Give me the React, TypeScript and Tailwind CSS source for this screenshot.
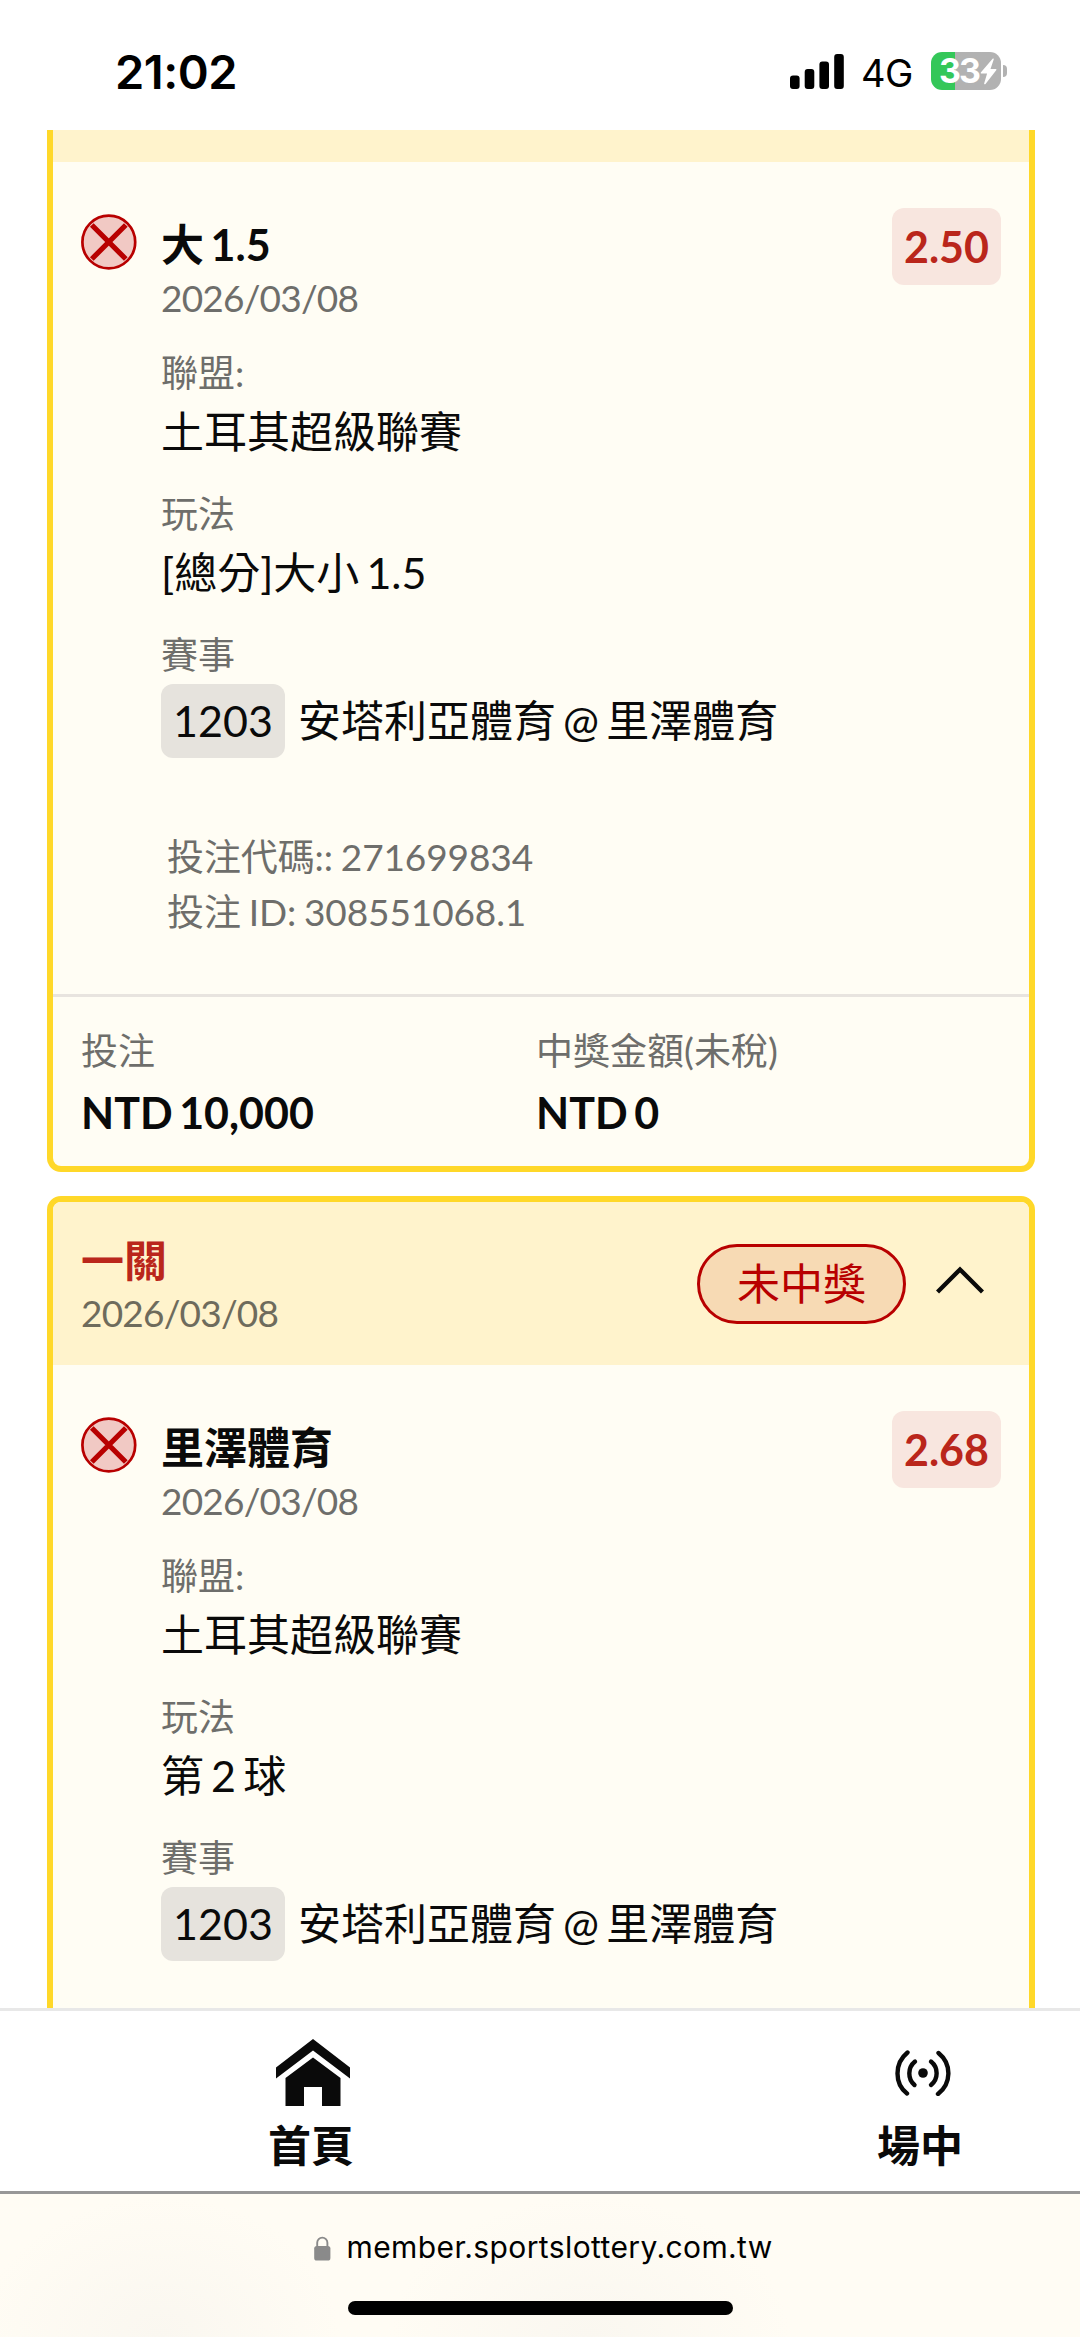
import type { ReactNode } from 'react';

interface Bet {
  pick: string;
  date: string;
  odds: string;
  league: string;
  market: string;
  eventNo: string;
  match: string;
}

const BETS: Bet[] = [
  {
    pick: '大 1.5',
    date: '2026/03/08',
    odds: '2.50',
    league: '土耳其超級聯賽',
    market: '[總分]大小 1.5',
    eventNo: '1203',
    match: '安塔利亞體育 @ 里澤體育',
  },
  {
    pick: '里澤體育',
    date: '2026/03/08',
    odds: '2.68',
    league: '土耳其超級聯賽',
    market: '第 2 球',
    eventNo: '1203',
    match: '安塔利亞體育 @ 里澤體育',
  },
];

function StatusBar() {
  return (
    <div className="flex h-[130px] shrink-0 items-start justify-between pl-[115px] pr-[73px] pt-[52px] font-['Inter',sans-serif] text-black">
      <span className="text-[47px] font-semibold leading-[40px] tracking-[-0.5px]">21:02</span>
      <div className="flex items-start">
        <svg width="54" height="38" viewBox="0 0 54 38">
          <rect x="0" y="23.5" width="9.6" height="13.5" rx="3" />
          <rect x="14.7" y="17" width="9.6" height="20" rx="3" />
          <rect x="29.4" y="9.5" width="9.6" height="27.5" rx="3" />
          <rect x="44.2" y="2" width="9.6" height="35" rx="3" />
        </svg>
        <span className="ml-[17px] w-[53px] whitespace-nowrap text-[38px] leading-[43px] tracking-[-0.5px]">4G</span>
        <div className="ml-[17px] flex items-center">
          <div className="flex h-[38px] w-[70px] items-center rounded-[11px] bg-linear-to-r from-[#34c759] from-34% to-[#b2b2b2] to-34% pl-2 text-white">
            <span className="text-[34px] font-bold leading-[38px] tracking-[-2px]">33</span>
            <svg width="17" height="27" viewBox="0 0 17 27" className="ml-px">
              <path d="M12.6.8 1 14.2c-.6.7-.2 1.4.6 1.4h5.5L4.2 25.2c-.3 1.1.7 1.4 1.3.7L16.2 12.3c.6-.8.2-1.4-.6-1.4h-5.1L13.7 1.5c.3-1-.6-1.3-1.1-.7Z" fill="currentColor" />
            </svg>
          </div>
          <div className="ml-[2px] h-3 w-1 rounded-r-full bg-[#b2b2b2]" />
        </div>
      </div>
    </div>
  );
}

function LostIcon() {
  return (
    <svg width="56" height="56" viewBox="0 0 56 56" className="mt-[6px] shrink-0">
      <circle cx="27.8" cy="28" r="26.4" fill="#f1c9c4" stroke="#b80000" strokeWidth="2.7" />
      <path d="M10.8 11 44.8 45M44.8 11 10.8 45" stroke="#b80000" strokeWidth="5.2" />
    </svg>
  );
}

function Field({ label, children }: { label: string; children: ReactNode }) {
  return (
    <div className="flex flex-col">
      <span className="text-[37px] leading-[56px] text-[#6e6e6b]">{label}</span>
      {children}
    </div>
  );
}

function BetBody({ bet }: { bet: Bet }) {
  return (
    <div className="flex items-start px-7 pt-[46px]">
      <LostIcon />
      <div className="ml-6 mt-[7px] flex flex-1 flex-col">
        <span className="text-[43px] font-bold leading-[60px]">{bet.pick}</span>
        <span className="-mt-[2px] text-[37px] leading-[50px] tracking-[-0.8px] text-[#6e6e6b]">{bet.date}</span>
        <div className="mt-[22px] flex flex-col gap-6">
          <Field label="聯盟:">
            <span className="text-[43px] leading-[61px]">{bet.league}</span>
          </Field>
          <Field label="玩法">
            <span className="text-[43px] leading-[61px]">{bet.market}</span>
          </Field>
          <Field label="賽事">
            <div className="mt-px flex items-center gap-[13px] text-[43px] leading-[74px]">
              <span className="w-[124px] rounded-xl bg-[#e6e3dd] text-center">{bet.eventNo}</span>
              <span className="whitespace-nowrap">{bet.match}</span>
            </div>
          </Field>
        </div>
      </div>
      <span className="w-[109px] rounded-xl bg-[#f8e6df] text-center text-[43px] font-bold leading-[77px] text-[#ba261b]">
        {bet.odds}
      </span>
    </div>
  );
}

function HomeIcon() {
  return (
    <svg width="74" height="67" viewBox="0 0 74 67" fill="#0a0a0a">
      <path d="M37 0 74 28.5V39.5L37 11.5 0 39.5V28.5Z" />
      <path d="M37 18.5 64.5 39V67H46V48H28V67H9.5V39Z" />
    </svg>
  );
}

function LiveIcon() {
  return (
    <svg width="56" height="46" viewBox="0 0 56 46" fill="none" stroke="#0a0a0a" strokeWidth="4.4" strokeLinecap="round">
      <circle cx="28" cy="23" r="4.8" fill="#0a0a0a" stroke="none" />
      <path d="M20 11.5C12.5 17.5 12.5 29 19.5 35M36 11.5C43.5 17.5 43.5 29 36 35" />
      <path d="M12.5 2.5C-1 13.5-.5 34 12 43.5M43.5 3C57 14 56.5 33.5 43 44" />
    </svg>
  );
}

export default function App() {
  const [first, second] = BETS;

  return (
    <div className="flex h-[2337px] w-[1080px] flex-col overflow-hidden bg-white font-['Lato','Noto_Sans_CJK_TC',sans-serif] text-[#0a0a0a]">
      <StatusBar />

      {/* Bet slips */}
      <main className="flex h-[1878px] shrink-0 flex-col gap-6 overflow-hidden pl-[47px] pr-[45px] [word-spacing:-3.9px]">
        <section className="h-[1042px] shrink-0 overflow-hidden rounded-b-[14px] border-x-[6px] border-b-[6px] border-[#ffd829] bg-[#fffdf4]">
          <div className="h-8 bg-[#fff3cc]" />
          <BetBody bet={first} />
          <div className="mt-[71px] flex flex-col pl-[114px] text-[37px] leading-[55px] tracking-[-0.1px] text-[#6e6e6b] [word-spacing:-1.5px]">
            <span>投注代碼:: 271699834</span>
            <span>投注 ID: 308551068.1</span>
          </div>
          <div className="mt-[55px] grid grid-cols-[455px_1fr] border-t-[3px] border-[#e8e4df] px-7 pt-[26px]">
            <Field label="投注">
              <span className="text-[43px] font-bold leading-[68px]">NTD 10,000</span>
            </Field>
            <Field label="中獎金額(未稅)">
              <span className="text-[43px] font-bold leading-[68px]">NTD 0</span>
            </Field>
          </div>
        </section>

        <section className="h-[1042px] shrink-0 overflow-hidden rounded-[14px] border-[6px] border-[#ffd829] bg-[#fffdf4]">
          <header className="flex h-[163px] items-start bg-[#fff3cc] pl-7 pr-[45px]">
            <div className="flex flex-1 flex-col pt-8">
              <span className="text-[43px] font-bold leading-[54px] text-[#ba261b]">一關</span>
              <span className="text-[37px] leading-[50px] tracking-[-0.8px] text-[#6e6b5c]">{second.date}</span>
            </div>
            <span className="mt-[42px] w-[209px] rounded-full border-[3px] border-[#b80000] bg-[#f7dab4] text-center text-[43px] leading-[74px] text-[#b80000]">
              未中獎
            </span>
            <svg width="48" height="28" viewBox="0 0 48 28" className="ml-[30px] mt-[64px]" fill="none" stroke="#0a0a0a" strokeWidth="4.4">
              <path d="M1.5 26 24 3.5 46.5 26" />
            </svg>
          </header>
          <BetBody bet={second} />
        </section>
      </main>

      {/* Bottom tabs */}
      <nav className="flex h-[183px] shrink-0 border-t-[3px] border-[#e8e8e8] bg-white text-[43px] font-bold leading-[60px]">
        <div className="flex w-[625px] shrink-0 flex-col items-center pt-7">
          <HomeIcon />
          <span className="mr-[3px] mt-[10px]">首頁</span>
        </div>
        <div className="flex w-[595px] shrink-0 flex-col items-center pt-[39px]">
          <LiveIcon />
          <span className="mr-[5px] mt-5">場中</span>
        </div>
      </nav>

      {/* Browser address bar */}
      <footer className="flex flex-1 flex-col items-center border-t-[3px] border-[#979797] bg-[#fffcf4] bg-[radial-gradient(ellipse_180px_140px_at_160px_100%,#faf7f0,transparent),radial-gradient(ellipse_200px_140px_at_590px_100%,#faf7f0,transparent)] font-['Inter',sans-serif]">
        <div className="ml-[5px] mt-[31px] flex items-center">
          <svg width="17" height="25" viewBox="0 0 17 25" className="mt-[3px]">
            <path d="M3.2 11V6.7a5.1 5.1 0 0 1 10.2 0V11" fill="none" stroke="#8a8a8a" strokeWidth="1.9" />
            <rect x="0.2" y="10" width="16.2" height="14.5" rx="2.6" fill="#8a8a8a" />
          </svg>
          <span className="ml-4 w-[425px] whitespace-nowrap text-[30px] leading-[44px] tracking-[0.4px] text-black">
            member.sportslottery.com.tw
          </span>
        </div>
        <div className="mt-[32px] h-[14px] w-[385px] rounded-full bg-black" />
      </footer>
    </div>
  );
}
